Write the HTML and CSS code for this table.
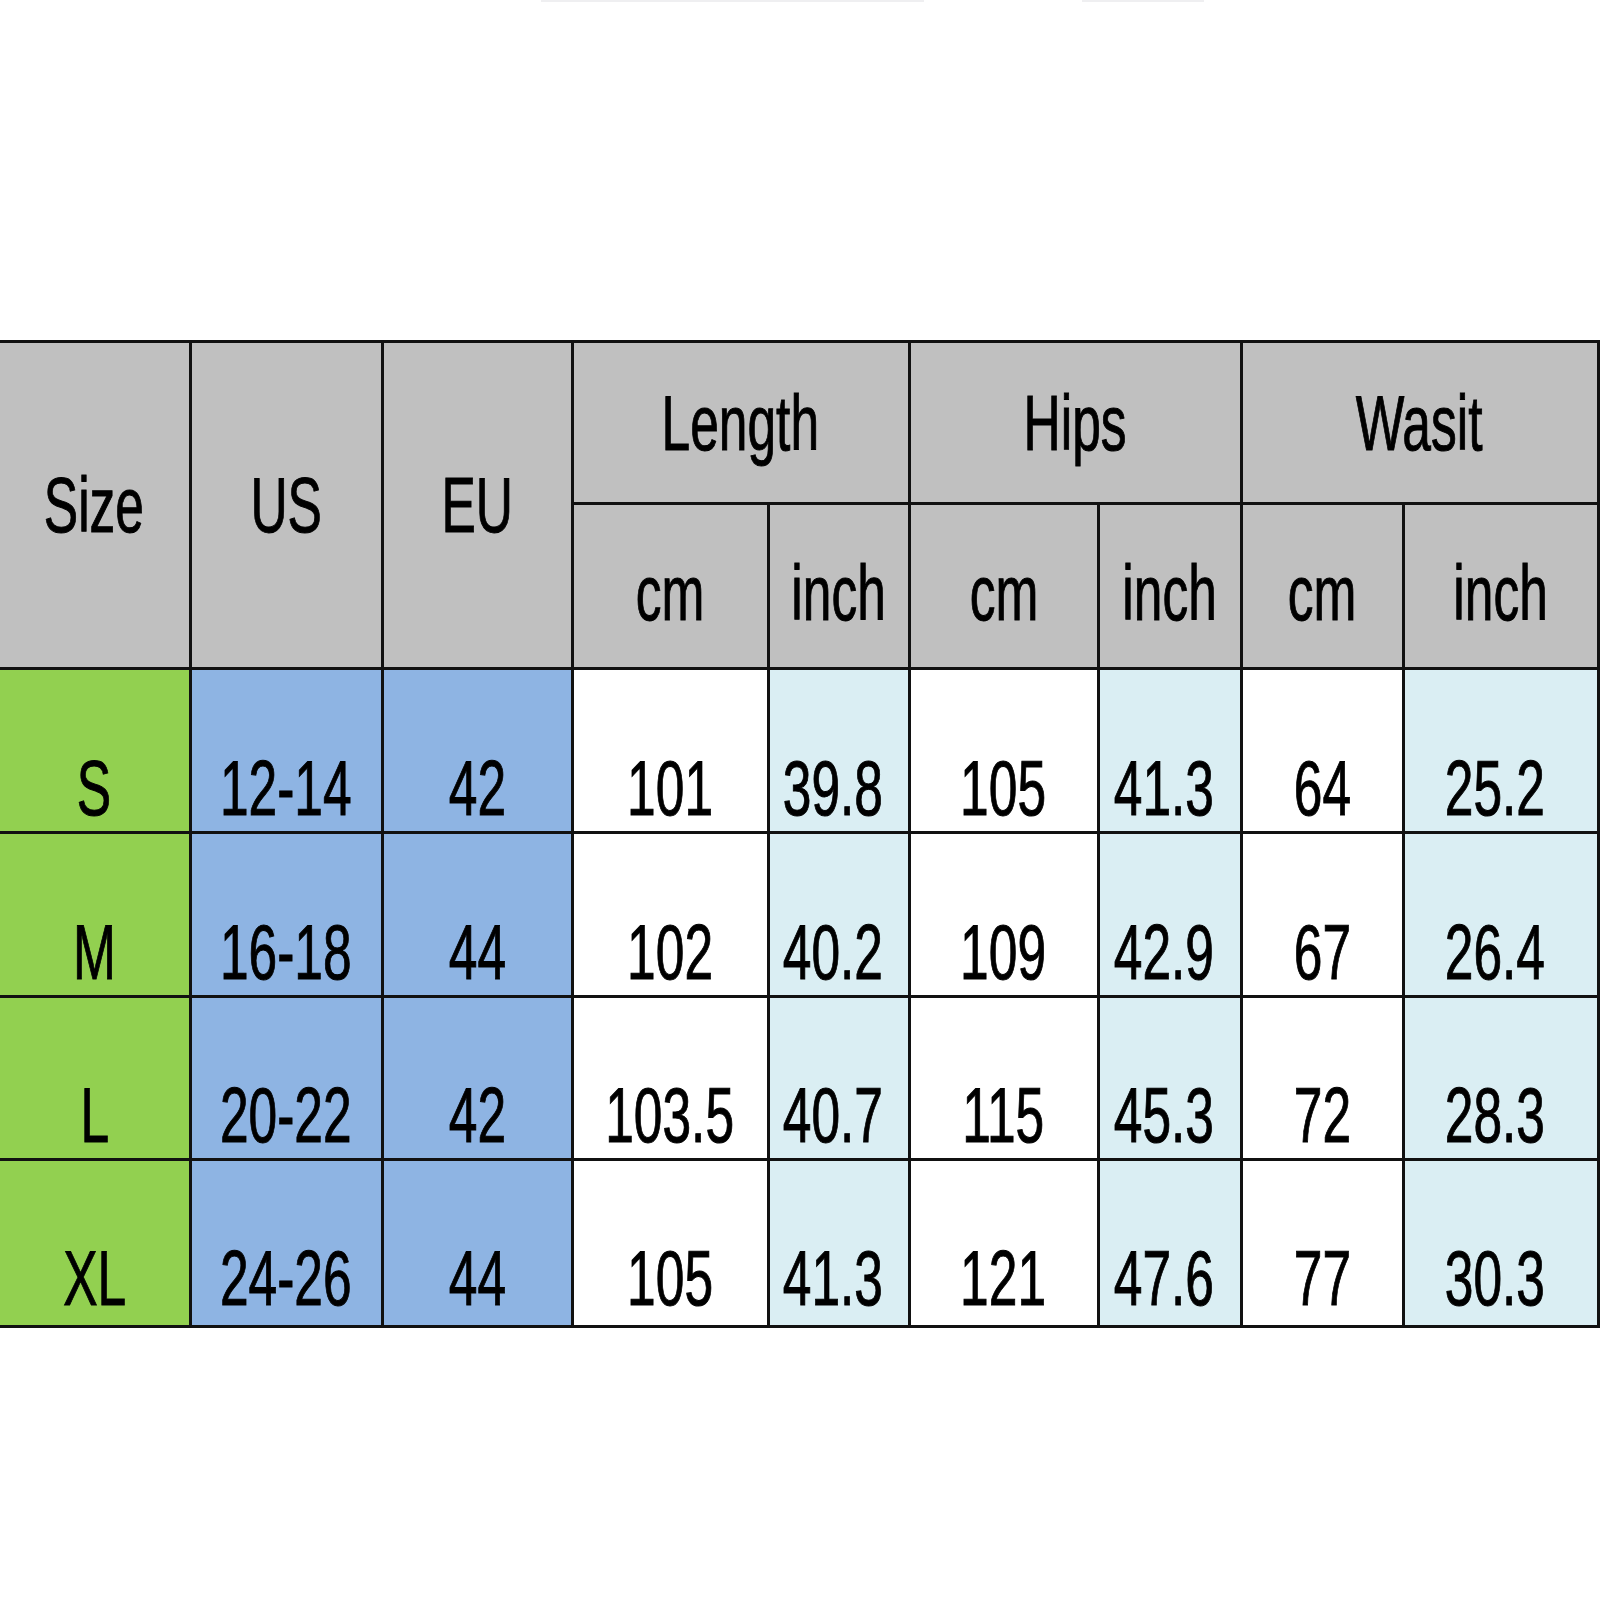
FILE: index.html
```html
<!DOCTYPE html>
<html lang="en">
<head>
<meta charset="utf-8">
<title>Size Chart</title>
<link rel="stylesheet" href="styles.css">
</head>
<body>
<div class="top">
  <div class="streak s1"></div>
  <div class="streak s2"></div>
</div>
<table class="chart">
  <colgroup>
    <col class="c1"><col class="c2"><col class="c3"><col class="c4"><col class="c5"><col class="c6"><col class="c7"><col class="c8"><col class="c9">
  </colgroup>
  <tr class="h1">
    <th rowspan="2" class="first"><span class="t">Size</span></th>
    <th rowspan="2"><span class="t">US</span></th>
    <th rowspan="2"><span class="t">EU</span></th>
    <th colspan="2"><span class="t">Length</span></th>
    <th colspan="2"><span class="t">Hips</span></th>
    <th colspan="2"><span class="t">Wasit</span></th>
  </tr>
  <tr class="h2">
    <th><span class="t">cm</span></th>
    <th><span class="t">inch</span></th>
    <th><span class="t">cm</span></th>
    <th><span class="t">inch</span></th>
    <th><span class="t">cm</span></th>
    <th><span class="t">inch</span></th>
  </tr>
  <tr class="r1">
    <td class="first green"><span class="t">S</span></td>
    <td class="blue"><span class="t">12-14</span></td>
    <td class="blue"><span class="t">42</span></td>
    <td class="white"><span class="t">101</span></td>
    <td class="light"><span class="t">39.8</span></td>
    <td class="white"><span class="t">105</span></td>
    <td class="light"><span class="t">41.3</span></td>
    <td class="white"><span class="t">64</span></td>
    <td class="light"><span class="t">25.2</span></td>
  </tr>
  <tr class="r2">
    <td class="first green"><span class="t">M</span></td>
    <td class="blue"><span class="t">16-18</span></td>
    <td class="blue"><span class="t">44</span></td>
    <td class="white"><span class="t">102</span></td>
    <td class="light"><span class="t">40.2</span></td>
    <td class="white"><span class="t">109</span></td>
    <td class="light"><span class="t">42.9</span></td>
    <td class="white"><span class="t">67</span></td>
    <td class="light"><span class="t">26.4</span></td>
  </tr>
  <tr class="r3">
    <td class="first green"><span class="t">L</span></td>
    <td class="blue"><span class="t">20-22</span></td>
    <td class="blue"><span class="t">42</span></td>
    <td class="white"><span class="t">103.5</span></td>
    <td class="light"><span class="t">40.7</span></td>
    <td class="white"><span class="t">115</span></td>
    <td class="light"><span class="t">45.3</span></td>
    <td class="white"><span class="t">72</span></td>
    <td class="light"><span class="t">28.3</span></td>
  </tr>
  <tr class="r4">
    <td class="first green"><span class="t">XL</span></td>
    <td class="blue"><span class="t">24-26</span></td>
    <td class="blue"><span class="t">44</span></td>
    <td class="white"><span class="t">105</span></td>
    <td class="light"><span class="t">41.3</span></td>
    <td class="white"><span class="t">121</span></td>
    <td class="light"><span class="t">47.6</span></td>
    <td class="white"><span class="t">77</span></td>
    <td class="light"><span class="t">30.3</span></td>
  </tr>
</table>
</body>
</html>
```
FILE: styles.css
```css
html, body {
  margin: 0;
  padding: 0;
  background: #ffffff;
  width: 1600px;
  height: 1600px;
  overflow: hidden;
}

.top {
  height: 340px;
  display: flex;
  align-items: flex-start;
}

.streak {
  height: 2px;
  background: #efeff1;
}

.s1 {
  margin-left: 541px;
  width: 383px;
}

.s2 {
  margin-left: 158px;
  width: 122px;
}

.chart {
  border-collapse: collapse;
  table-layout: fixed;
  width: 1598px;
  font-family: "Liberation Sans", Arial, sans-serif;
  font-size: 78px;
  line-height: 1;
  color: #000;
}

.c1 { width: 190px; }
.c2 { width: 192px; }
.c3 { width: 190px; }
.c4 { width: 196px; }
.c5 { width: 141px; }
.c6 { width: 189px; }
.c7 { width: 143px; }
.c8 { width: 162px; }
.c9 { width: 195px; }

.chart th,
.chart td {
  border: 3px solid #111;
  padding: 0;
  text-align: center;
  white-space: nowrap;
}

.chart .first {
  border-left: none;
}

.chart th {
  background: #c0c0c0;
  font-weight: normal;
  vertical-align: middle;
}

.h2 th {
  padding-top: 14px;
}

.chart td {
  vertical-align: bottom;
  padding-bottom: 4px;
}

.chart td.light {
  padding-right: 12px;
}

.h1 { height: 162px; }
.h2 { height: 165px; }
.r1 { height: 164px; }
.r2 { height: 164px; }
.r3 { height: 163px; }
.r4 { height: 167px; }

.r4 td { padding-bottom: 8px; }

.green { background: #92d050; }
.blue { background: #8eb4e3; }
.white { background: #ffffff; }
.light { background: #daeef3; }

.t {
  display: inline-block;
  margin: 0 -60px;
  transform: scaleX(0.66);
  transform-origin: center;
  -webkit-text-stroke: 1px #000;
}
```
